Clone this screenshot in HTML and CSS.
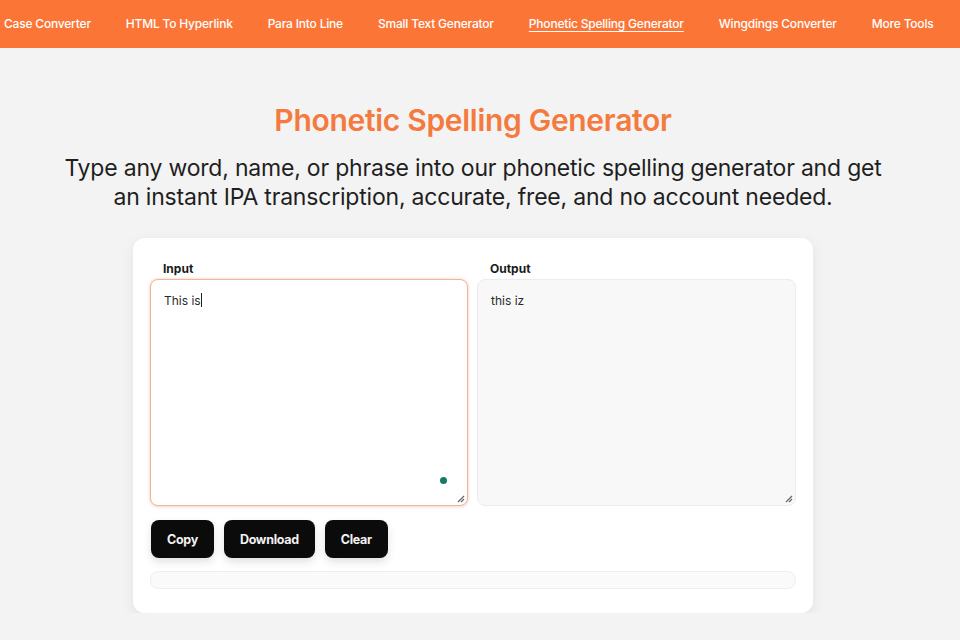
FILE: index.html
```html
<!DOCTYPE html>
<html lang="en">
<head>
<meta charset="utf-8">
<title>Phonetic Spelling Generator</title>
<link rel="stylesheet" href="styles.css">
</head>
<body>
<nav class="topnav">
  <a class="nav-link" href="#">Case Converter</a>
  <a class="nav-link" href="#">HTML To Hyperlink</a>
  <a class="nav-link" href="#">Para Into Line</a>
  <a class="nav-link" href="#">Small Text Generator</a>
  <a class="nav-link active" href="#">Phonetic Spelling Generator</a>
  <a class="nav-link" href="#">Wingdings Converter</a>
  <a class="nav-link" href="#">More Tools</a>
</nav>
<main class="page">
  <h1 class="title">Phonetic Spelling Generator</h1>
  <p class="subtitle">Type any word, name, or phrase into our phonetic spelling generator and get an instant IPA transcription, accurate, free, and no account needed.</p>
  <section class="card">
    <div class="columns">
      <div class="field">
        <div class="label">Input</div>
        <div class="box box-input">
          <span class="text">This is</span><span class="caret"></span>
          <span class="dot"></span>
          <svg class="grip" width="9" height="9" viewBox="0 0 9 9"><path d="M8 2 L2 8 M8 5 L5 8" stroke="#666" stroke-width="1.2" fill="none"/></svg>
        </div>
      </div>
      <div class="field">
        <div class="label">Output</div>
        <div class="box box-output">
          <span class="text">this iz</span>
          <svg class="grip" width="9" height="9" viewBox="0 0 9 9"><path d="M8 2 L2 8 M8 5 L5 8" stroke="#666" stroke-width="1.2" fill="none"/></svg>
        </div>
      </div>
    </div>
    <div class="actions">
      <button class="btn">Copy</button>
      <button class="btn">Download</button>
      <button class="btn">Clear</button>
    </div>
    <div class="status"></div>
  </section>
</main>
</body>
</html>
```
FILE: styles.css
```css
* { box-sizing: border-box; }
html, body { margin: 0; padding: 0; }
body {
  background: #f3f3f3;
  font-family: Inter, "Liberation Sans", sans-serif;
  color: #1f1f1f;
}
.topnav {
  height: 48px;
  background: #fb7537;
  display: flex;
  align-items: center;
  gap: 35px;
  padding-left: 4px;
  white-space: nowrap;
  overflow: hidden;
}
.nav-link {
  color: #fff;
  text-decoration: none;
  font-size: 12px;
  font-weight: 500;
  letter-spacing: -0.2px;
  padding-bottom: 1px;
}
.nav-link.active {
  text-decoration: underline;
  text-underline-offset: 3px;
  text-decoration-thickness: 1px;
}
.page {
  display: flex;
  flex-direction: column;
  align-items: center;
  padding-top: 53px;
  padding-right: 14px;
}
.title {
  margin: 0;
  color: #f47a3e;
  font-size: 30px;
  font-weight: 600;
  letter-spacing: -0.3px;
  line-height: 38px;
}
.subtitle {
  margin: 15px 0 0;
  width: 845px;
  text-align: center;
  font-size: 23px;
  line-height: 29px;
  color: #1f1f1f;
  letter-spacing: -0.2px;
}
.card {
  margin-top: 26px;
  width: 680px;
  background: #fff;
  border-radius: 12px;
  box-shadow: 0 4px 14px rgba(0,0,0,0.07);
  padding: 23px 17px 24px;
  display: flex;
  flex-direction: column;
}
.columns {
  display: grid;
  grid-template-columns: 318px 319px;
  gap: 9px;
}
.field { display: flex; flex-direction: column; }
.label {
  font-size: 12px;
  font-weight: 700;
  color: #1a1a1a;
  padding-left: 13px;
  line-height: 16px;
  margin-bottom: 2px;
}
.box {
  position: relative;
  height: 227px;
  border-radius: 8px;
  padding: 13px 13px;
  font-size: 12px;
  line-height: 16px;
  color: #2a2a2a;
}
.box-input {
  border: 1.5px solid #f3b397;
  box-shadow: 0 0 0 1.5px rgba(251,117,55,0.12), 0 2px 4px rgba(0,0,0,0.05);
  background: #fff;
}
.box-output {
  border: 1px solid #ececec;
  background: #f8f8f8;
}
.caret {
  display: inline-block;
  width: 1px;
  height: 14px;
  background: #222;
  vertical-align: -2px;
}
.dot {
  position: absolute;
  right: 20px;
  bottom: 21px;
  width: 7px;
  height: 7px;
  border-radius: 50%;
  background: #177a66;
}
.grip {
  position: absolute;
  right: 2px;
  bottom: 2px;
}
.actions {
  display: flex;
  gap: 10px;
  margin-top: 14px;
  padding-left: 1px;
}
.btn {
  height: 38px;
  padding: 0 16px;
  background: #0b0b0b;
  color: #f2f2f2;
  border: none;
  border-radius: 8px;
  font-family: Inter, "Liberation Sans", sans-serif;
  font-size: 12.5px;
  font-weight: 700;
  letter-spacing: -0.3px;
  box-shadow: 0 4px 8px rgba(0,0,0,0.12);
}
.status {
  margin-top: 13px;
  height: 18px;
  border: 1px solid #efefef;
  background: #fafafa;
  border-radius: 8px;
}
```
